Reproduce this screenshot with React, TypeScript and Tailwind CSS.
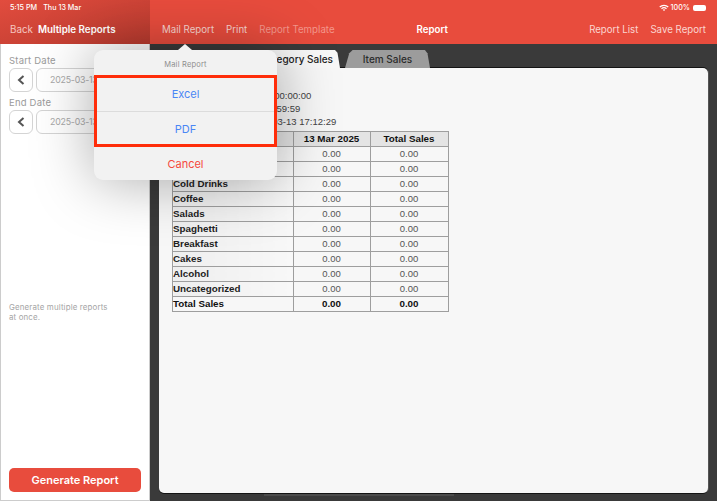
import React from "react";

const rows = ["", " ", "Cold Drinks", "Coffee", "Salads", "Spaghetti", "Breakfast", "Cakes", "Alcohol", "Uncategorized"];
const ui = "font-['Inter','Liberation_Sans',sans-serif]";
const web = "font-['Liberation_Sans',Arial,sans-serif]";

function Chevron() {
  return (
    <svg width="8" height="12" viewBox="0 0 8 12" fill="none" stroke="#555" strokeWidth="2">
      <path d="M6.5 2 L2 6 L6.5 10" />
    </svg>
  );
}

function DateRow({ label }: { label: string }) {
  return (
    <div className="flex flex-col">
      <div className="text-[9.5px] leading-[12px] text-[#9a9a9a] tracking-[0.2px]">{label}</div>
      <div className="mt-[1px] flex gap-[3px]">
        <div className="flex h-[24px] w-[24px] items-center justify-center rounded-[6px] border border-[#d4d4d4] bg-white">
          <Chevron />
        </div>
        <div className="flex h-[24px] w-[100px] shrink-0 items-center overflow-hidden whitespace-nowrap rounded-[6px] border border-[#d4d4d4] bg-white pl-[13px] text-[8.8px] tracking-[-0.2px] text-[#a8a8a8]">
          2025-03-13
        </div>
      </div>
    </div>
  );
}

function Cell({ children, bold, head }: { children?: React.ReactNode; bold?: boolean; head?: boolean }) {
  return (
    <td className={`h-[15px] border border-[#9e9e9e] p-0 pr-[1px] text-center leading-[14px] ${bold || head ? "text-[9.8px] font-bold text-[#111]" : "text-[9.5px] text-[#555]"} ${head ? "bg-[#e4e4e4]" : ""}`}>
      {children}
    </td>
  );
}

export default function App() {
  return (
    <div className={`relative flex h-[501px] w-[717px] overflow-hidden bg-[#3a3a3a] ${ui}`}>
      {/* Left column */}
      <aside className="flex h-full w-[150px] shrink-0 flex-col">
        <div className="flex h-[44px] shrink-0 flex-col bg-gradient-to-br from-[#e24c3e] to-[#b93b2f] px-[10px] text-white">
          <div className="mt-[3px] flex gap-[6px] text-[7.2px] leading-[9px] font-medium">
            <span>5:15 PM</span>
            <span>Thu 13 Mar</span>
          </div>
          <div className="mt-[11px] flex gap-[5px] text-[9.8px] leading-[14px]">
            <span className="text-[#f6c6c0]">Back</span>
            <span className="font-semibold whitespace-nowrap">Multiple Reports</span>
          </div>
        </div>
        <div className="flex flex-1 flex-col border-x border-b border-[#cccccc] bg-white pl-[8px] pr-[8px] pb-[8px] pt-[11px]">
          <div className="flex flex-col gap-[5px]">
            <DateRow label="Start Date" />
            <DateRow label="End Date" />
          </div>
          <p className="mt-[168px] text-[7.9px] leading-[10px] text-[#a5a5a5] tracking-[0.15px]">
            Generate multiple reports
            <br />
            at once.
          </p>
          <button className="mt-auto h-[24px] w-[132px] rounded-[5px] bg-[#e84c3d] text-[11px] font-semibold text-white">
            Generate Report
          </button>
        </div>
      </aside>

      {/* Right column */}
      <main className="flex h-full min-w-0 flex-1 flex-col">
        <header className="flex h-[44px] shrink-0 flex-col bg-[#e84c3d] pl-[12px] pr-[11px] text-white">
          <div className="mt-[3px] flex items-center justify-end gap-[2px] text-[7.2px] leading-[9px] font-medium">
            <svg width="10" height="8" viewBox="0 0 20 15" fill="none" stroke="white" strokeWidth="2.4">
              <path d="M1.5 5.5 C6 1 14 1 18.5 5.5" />
              <path d="M5 9 C8 6.4 12 6.4 15 9" />
              <path d="M8.2 12 C9.2 11.2 10.8 11.2 11.8 12" />
            </svg>
            <span>100%</span>
            <span className="ml-[1px] h-[6px] w-[13px] rounded-[2px] bg-white" />
          </div>
          <div className="mt-[11px] flex items-center text-[9.7px] leading-[14px] text-[#fbd5d0]">
            <span>Mail Report</span>
            <span className="ml-[12px]">Print</span>
            <span className="ml-[12px] text-[#f4978c]">Report Template</span>
            <span className="ml-[82px] font-semibold text-white">Report</span>
            <span className="ml-auto">Report List</span>
            <span className="ml-[12px]">Save Report</span>
          </div>
        </header>

        <div className="flex min-h-0 flex-1 flex-col pl-[9px] pr-[9px] pt-[6px]">
          <div className="flex h-[18px] shrink-0 items-end pl-[14px]">
            <div className="flex h-[18px] w-[167px] justify-end bg-[#f8f8f8] pr-[7px] text-[10px] leading-[18px] font-medium text-[#222] [clip-path:polygon(0_0,97%_0,98.5%_15%,100%_100%,0_100%)]">
              Category Sales
            </div>
            <div className="ml-[5px] flex h-[18px] w-[85px] items-center justify-center bg-[#9c9c9c] text-[10px] font-medium text-[#2c2c2c] [clip-path:polygon(0_100%,5%_18%,9%_0,94%_0,97%_18%,100%_100%)]">
              Item Sales
            </div>
          </div>
          <div className={`min-h-0 flex-1 rounded-[5px] bg-[#f7f7f7] pl-[13px] pt-[21px] text-[9.5px] leading-[13px] text-[#444] shadow-[0_-1px_0_#141414,1px_0_0_#555,0_1px_0_#141414] ${web}`}>
            <div className="whitespace-nowrap pl-[51px]">2025-03-13 00:00:00</div>
            <div className="whitespace-nowrap pl-[40px]">2025-03-13 23:59:59</div>
            <div className="whitespace-nowrap pl-[76px]">2025-03-13 17:12:29</div>
            <table className="mt-[3px] w-[276px] table-fixed border-collapse">
              <colgroup>
                <col className="w-[121px]" />
                <col className="w-[77px]" />
                <col className="w-[78px]" />
              </colgroup>
              <thead>
                <tr>
                  <Cell head />
                  <Cell head>13 Mar 2025</Cell>
                  <Cell head>Total Sales</Cell>
                </tr>
              </thead>
              <tbody>
                {rows.map((r) => (
                  <tr key={r}>
                    <td className="h-[15px] border border-[#9e9e9e] bg-gradient-to-r from-[#eeeeee] to-[#f8f8f8] p-0 text-[9.8px] leading-[14px] font-bold text-[#222]">{r}</td>
                    <Cell>0.00</Cell>
                    <Cell>0.00</Cell>
                  </tr>
                ))}
                <tr>
                  <td className="h-[15px] border border-[#9e9e9e] p-0 text-[9.8px] leading-[14px] font-bold text-[#111]">Total Sales</td>
                  <Cell bold>0.00</Cell>
                  <Cell bold>0.00</Cell>
                </tr>
              </tbody>
            </table>
          </div>
          <div className="ml-[105px] mt-[1px] mb-[5px] h-[2px] w-[190px] shrink-0 bg-[#4c4c4c]" />
        </div>
      </main>

      {/* Popover */}
      <div className="absolute left-[94px] top-[50px] flex h-[130px] w-[183px] flex-col rounded-[9px] bg-[#f2f2f2] shadow-[0_0_60px_rgba(0,0,0,0.34)]">
        <div className="absolute left-[84px] top-[-6px] h-0 w-0 border-x-[7px] border-b-[6px] border-x-transparent border-b-[#f2f2f2]" />
        <div className="flex h-[25px] shrink-0 items-center justify-center pt-[4px] text-[7.5px] tracking-[0.2px] text-[#8e8e8e]">Mail Report</div>
        <div className="flex h-[36px] items-center justify-center pt-[2px] text-[11px] text-[#4a86f5]">Excel</div>
        <div className="flex h-[36px] items-center justify-center border-t border-[#dcdcdc] text-[11px] text-[#4a86f5]">PDF</div>
        <div className="flex flex-1 items-center justify-center pt-[2px] text-[11px] text-[#f5493d]">Cancel</div>
        <div className="absolute left-0 top-[25px] h-[72px] w-[183px] border-[3px] border-[#ff2d0a]" />
      </div>
    </div>
  );
}
